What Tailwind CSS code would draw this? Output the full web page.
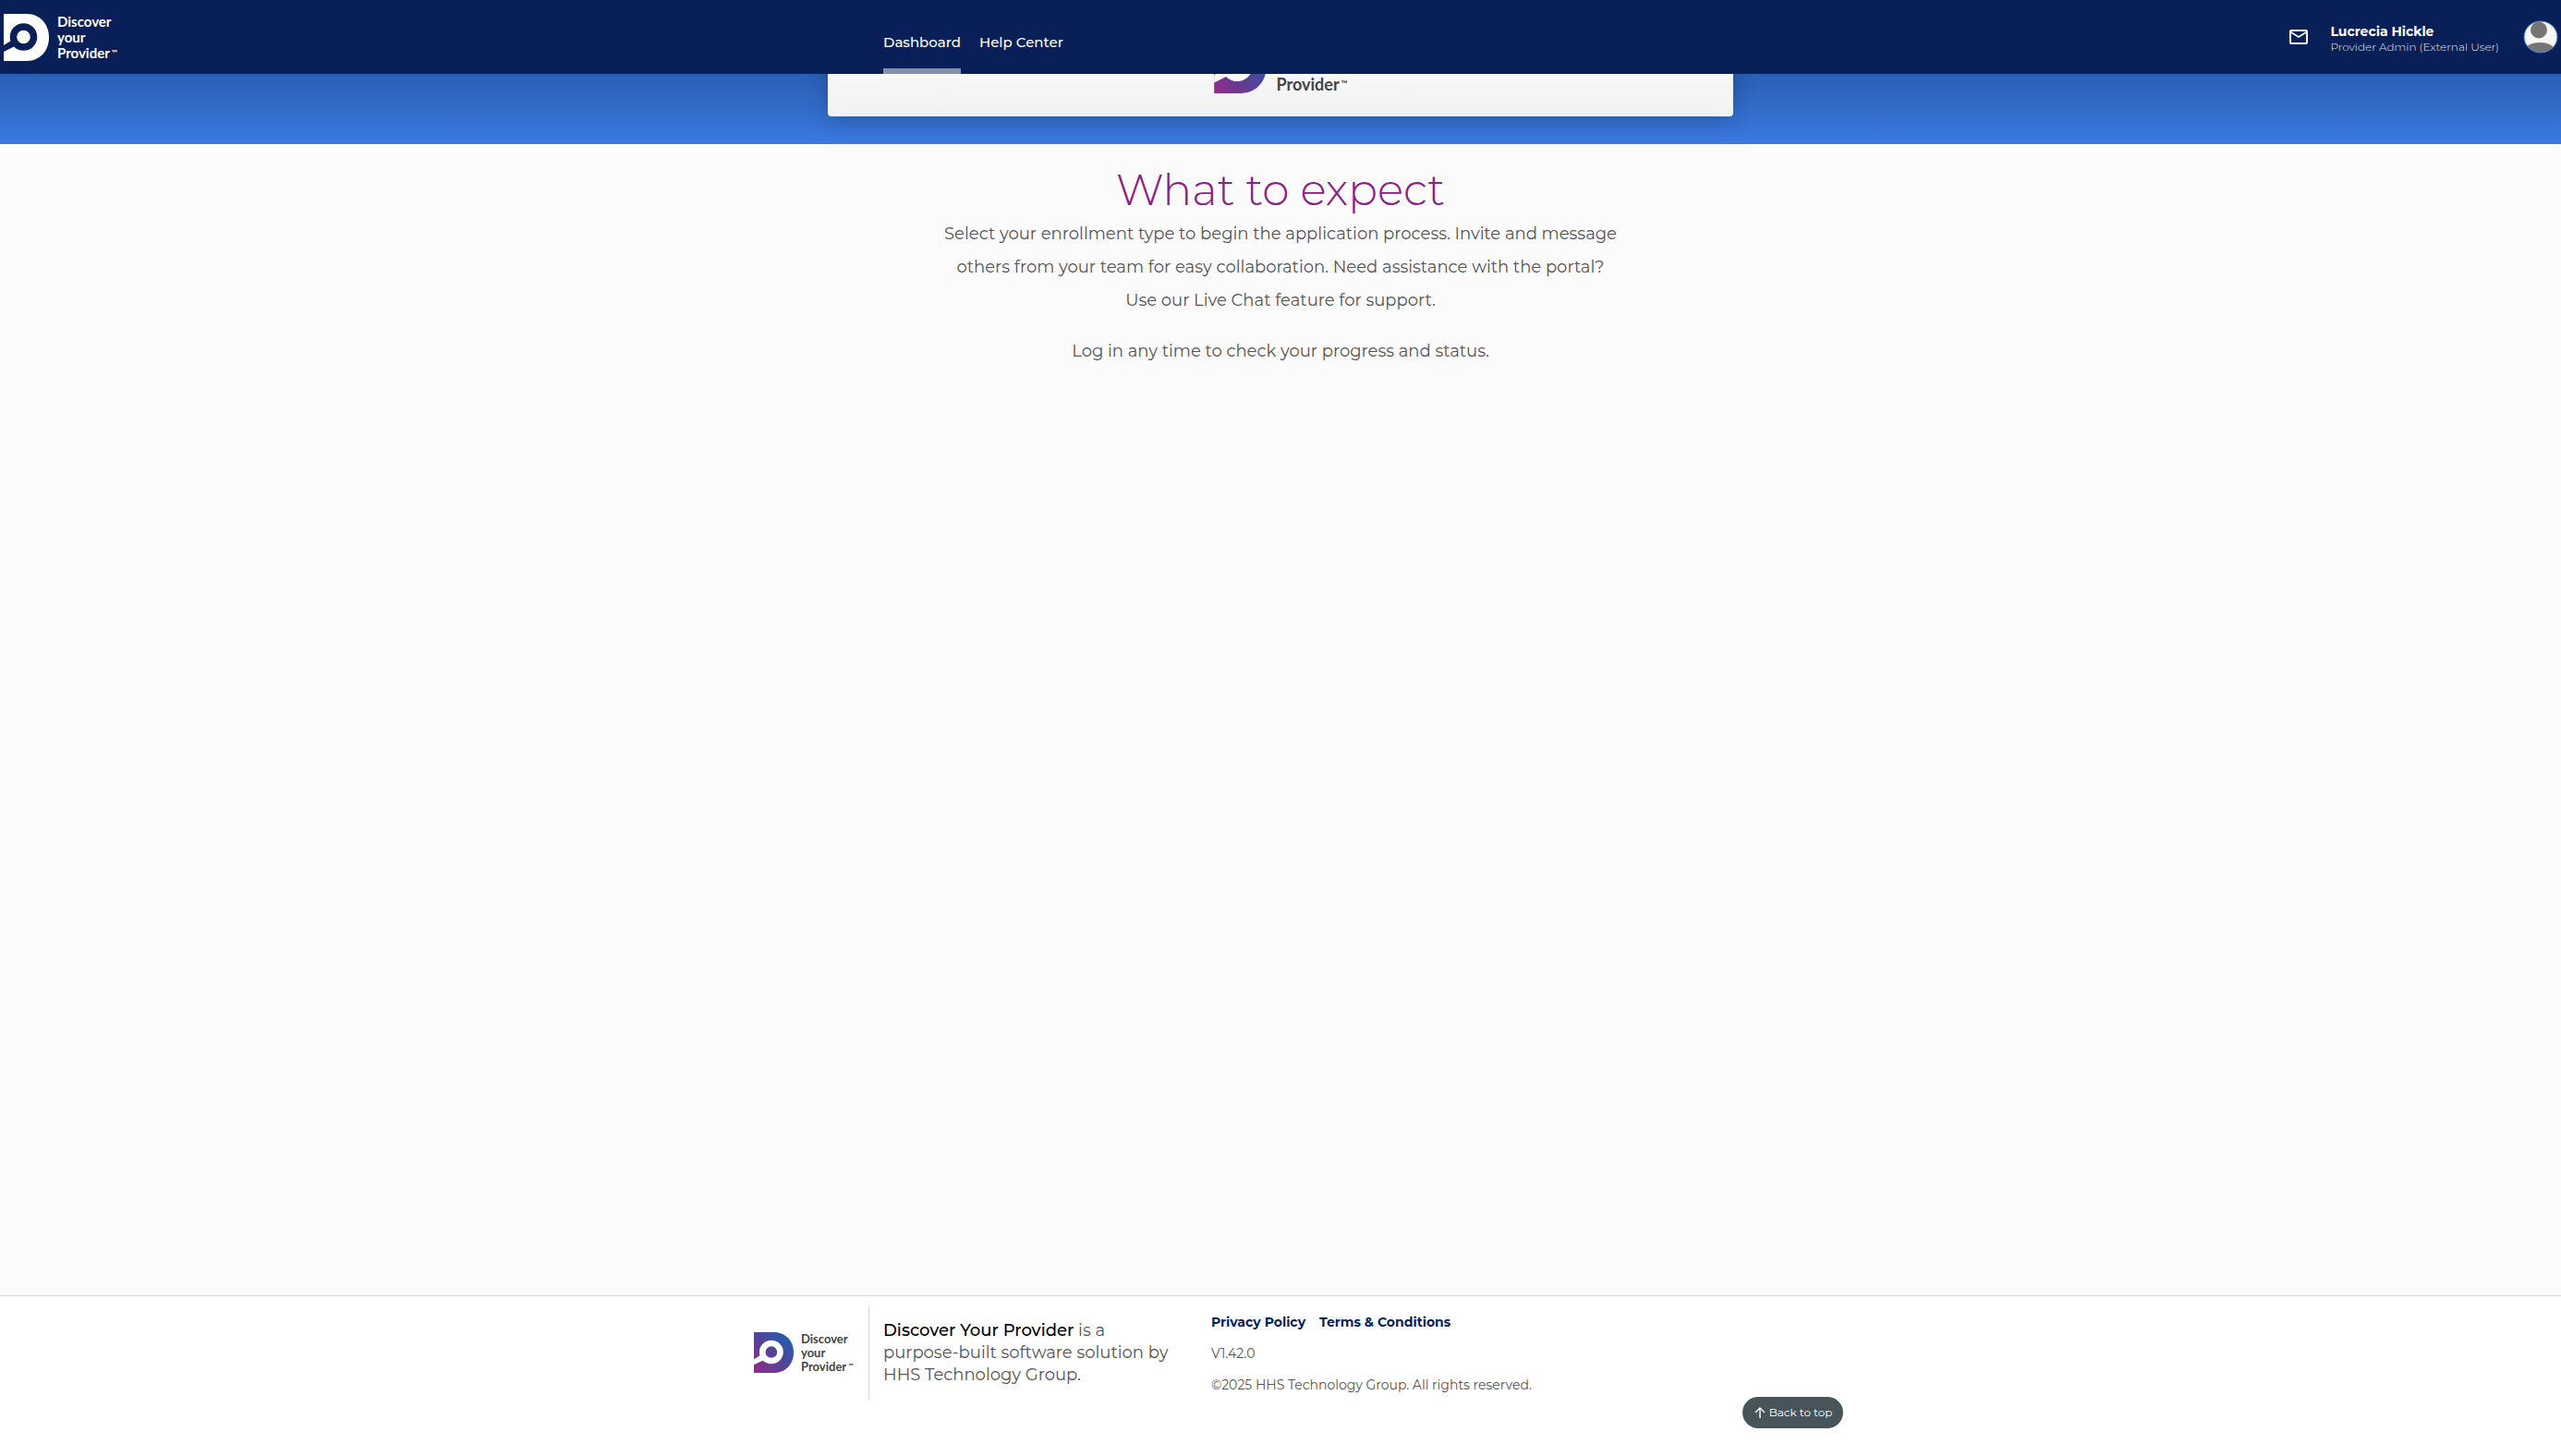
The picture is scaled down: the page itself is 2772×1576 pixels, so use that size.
<!DOCTYPE html>
<html lang="en">
<head>
<meta charset="utf-8">
<meta name="viewport" content="width=device-width, initial-scale=1">
<title>Discover Your Provider</title>
<script src="https://cdn.jsdelivr.net/npm/@tailwindcss/browser@4"></script>
</head>
<body class="flex min-h-screen flex-col bg-[#fbfbfb] font-[Montserrat,Inter,sans-serif] text-[#555555]">

<header class="grid h-20 shrink-0 grid-cols-[1fr_860px_1fr] bg-[#081f58] text-white">
  <a href="#" class="flex items-center gap-[9px] pl-1" aria-label="Discover your Provider">
    <svg class="h-[51px] w-[49px]" viewBox="0 0 49 51" aria-hidden="true">
      <path fill="#ffffff" d="M0 0H25C39 0 49 11 49 25.500S39 51 25 51H0Z"/>
      <path fill="#081f58" d="M0 34 9 28.500 12 35 0 41Z"/>
      <circle cx="21.500" cy="25" r="11" fill="#ffffff" stroke="#081f58" stroke-width="7.500"/>
    </svg>
    <span class="font-[Lato,sans-serif] text-[15px] leading-[17px] font-bold">Discover<br>your<br>Provider<span class="ml-0.5 align-[3px] text-[8px] leading-none">™</span></span>
  </a>
  <nav class="flex gap-5 text-[15px] font-medium" aria-label="Main">
    <a href="#" class="flex h-20 items-center border-b-[6px] border-[#8490ac] pt-[18px]">Dashboard</a>
    <a href="#" class="flex h-20 items-center border-b-[6px] border-transparent pt-[18px]">Help Center</a>
  </nav>
  <div class="flex items-center justify-end pr-[3px]">
    <button type="button" aria-label="Messages" class="mr-[22px]">
      <svg class="size-6" viewBox="0 0 24 24" fill="#ffffff"><path d="M22 6c0-1.100-.9-2-2-2H4c-1.100 0-2 .9-2 2v12c0 1.100.9 2 2 2h16c1.100 0 2-.9 2-2V6zm-2 0-8 5-8-5h16zm0 12H4V8l8 5 8-5v10z"/></svg>
    </button>
    <div class="mr-[26px] pt-1">
      <div class="text-sm leading-[18px] font-bold">Lucrecia Hickle</div>
      <div class="text-xs leading-4 font-light text-[#e4e8f0]">Provider Admin (External User)</div>
    </div>
    <button type="button" aria-label="Account">
      <svg class="h-9 w-[38px]" viewBox="0 0 38 36">
        <defs><clipPath id="face"><ellipse cx="19" cy="18" rx="18" ry="17"/></clipPath></defs>
        <ellipse cx="19" cy="18" rx="18" ry="17" fill="#f5f5f5"/>
        <g clip-path="url(#face)" fill="#757575"><circle cx="17" cy="10.500" r="9"/><ellipse cx="18" cy="35" rx="18" ry="11"/></g>
        <ellipse cx="19" cy="18" rx="18" ry="17" fill="none" stroke="#3d78d6"/>
      </svg>
    </button>
  </div>
</header>

<section class="flex h-[76px] shrink-0 flex-col items-center justify-end overflow-hidden bg-linear-to-b from-[#2a5fb6] to-[#3a7ae0] pb-[30px]">
  <div class="flex w-full max-w-[980px] justify-center rounded bg-linear-to-b from-white to-[#f2f2f2] pt-6 pb-[25px] shadow-[0_4px_24px_rgba(0,0,0,0.22)]">
    <div class="flex items-end gap-[11px]">
      <svg class="h-[59px] w-[57px]" viewBox="0 0 49 51" aria-hidden="true">
        <defs><linearGradient id="brand" x1="0" y1="1" x2="1" y2="0"><stop offset="0" stop-color="#942a87"/><stop offset=".55" stop-color="#4b469c"/><stop offset="1" stop-color="#1368b3"/></linearGradient></defs>
        <path fill="url(#brand)" d="M0 0H25C39 0 49 11 49 25.500S39 51 25 51H0Z"/>
        <path fill="#ffffff" d="M0 34 9 28.500 12 35 0 41Z"/>
        <circle cx="21.500" cy="25" r="11" fill="none" stroke="#ffffff" stroke-width="7.500"/>
      </svg>
      <span class="font-[Lato,sans-serif] text-lg leading-5 font-bold text-[#444444]">Provider<span class="ml-0.5 align-[4px] text-[9px] leading-none">™</span></span>
    </div>
  </div>
</section>

<main class="grow px-4 pt-5 text-center">
  <h1 class="text-[47px] leading-[59px] font-light text-[#8a2282]">What to expect</h1>
  <p class="text-lg leading-9">Select your enrollment type to begin the application process. Invite and message<br>others from your team for easy collaboration. Need assistance with the portal?<br>Use our Live Chat feature for support.</p>
  <p class="mt-[19px] text-lg leading-9">Log in any time to check your progress and status.</p>
</main>

<footer class="relative border-t border-[#d6d6d6] bg-white">
  <div class="mx-auto flex h-[173px] max-w-[1140px] pt-2.5">
    <div class="flex h-[102px] w-[125px] shrink-0 items-center gap-2 border-r border-[#d6d6d6]">
      <svg class="h-11 w-[43px]" viewBox="0 0 49 51" preserveAspectRatio="none" aria-hidden="true">
        <path fill="url(#brand)" d="M0 0H25C39 0 49 11 49 25.500S39 51 25 51H0Z"/>
        <path fill="#ffffff" d="M0 34 9 28.500 12 35 0 41Z"/>
        <circle cx="21.500" cy="25" r="11" fill="none" stroke="#ffffff" stroke-width="7.500"/>
      </svg>
      <span class="font-[Lato,sans-serif] text-[13px] leading-[15px] font-bold text-[#444444]">Discover<br>your<br>Provider<span class="ml-0.5 align-[3px] text-[7px] leading-none">™</span></span>
    </div>
    <p class="w-[370px] shrink-0 pt-[15px] pl-[15px] text-lg leading-6"><strong class="font-medium text-black">Discover Your Provider</strong> is a<br>purpose-built software solution by<br>HHS Technology Group.</p>
    <div class="flex flex-col gap-2.5 pt-1.5 text-sm leading-6">
      <div class="flex gap-[15px] font-bold text-[#081f58]"><a href="#">Privacy Policy</a><a href="#">Terms &amp; Conditions</a></div>
      <div>V1.42.0</div>
      <div>©2025 HHS Technology Group. All rights reserved.</div>
    </div>
  </div>
  <button type="button" class="absolute bottom-[30px] left-1/2 ml-[500px] flex h-[34px] w-[109px] items-center justify-center gap-[3px] rounded-full bg-[#47555b] text-xs text-white">
    <svg class="size-3.5" viewBox="0 0 14 14" fill="none" stroke="#ffffff" stroke-width="1.400" aria-hidden="true"><path d="M7 13V2M2 7l5-5 5 5"/></svg>Back to top
  </button>
</footer>
</body>
</html>
